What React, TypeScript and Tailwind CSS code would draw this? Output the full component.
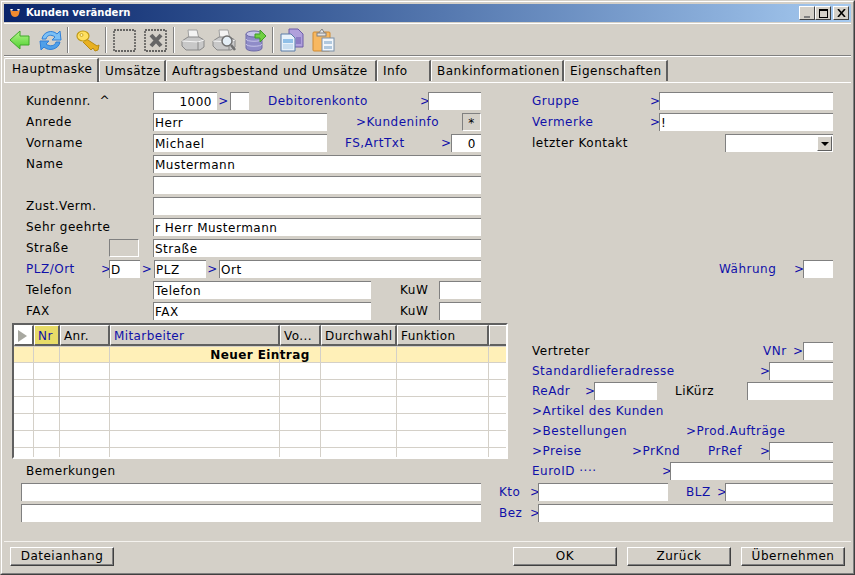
import React from "react";

const Sep = () => <div className="w-[2px] h-[26px] border-l border-[#808080] border-r-white border-r" />;

const Inp = ({ className = "", value = "" }: { className?: string; value?: string }) => (
  <input
    readOnly
    value={value}
    className={`h-[18px] shrink-0 bg-white border-t border-l border-[#808080] pl-[1px] text-[12px] text-black outline-none ${className}`}
  />
);

const L = ({ className = "", children }: { className?: string; children?: React.ReactNode }) => (
  <div className={`h-[18px] leading-[19px] shrink-0 whitespace-nowrap text-black ${className}`}>{children}</div>
);

const B = ({ className = "", children }: { className?: string; children?: React.ReactNode }) => (
  <div className={`h-[18px] leading-[19px] shrink-0 whitespace-nowrap text-[#1010a8] ${className}`}>{children}</div>
);

const Row = ({ className = "", children }: { className?: string; children?: React.ReactNode }) => (
  <div className={`flex items-start h-[21px] ${className}`}>{children}</div>
);

const Tab = ({ w, children, active }: { w: string; children: React.ReactNode; active?: boolean }) => (
  <div
    className={`${w} border-l border-white border-r-2 border-r-[#606060] rounded-tl-[2px] whitespace-nowrap border-t ${
      active ? "h-[24px] pl-[7px] leading-[21px]" : "h-[21px] mt-[2px] pl-[5px] leading-[20px]"
    }`}
  >
    {children}
  </div>
);

const Btn = ({ className = "", children }: { className?: string; children: React.ReactNode }) => (
  <button className={`h-[19px] leading-[17px] border border-t-white border-l-white border-r-[#404040] border-b-[#404040] text-center text-black shadow-[inset_-1px_-1px_0_#808080] ${className}`}>
    {children}
  </button>
);

const Hd = ({ children, className = "" }: { children?: React.ReactNode; className?: string }) => (
  <div className={`h-[21px] leading-[20px] pl-[3px] border-t border-l border-white border-r-2 border-b-2 border-r-[#606060] border-b-[#606060] whitespace-nowrap overflow-hidden ${className}`}>
    {children}
  </div>
);

const gridCols = "grid grid-cols-[20px_26px_50px_170px_41px_76px_92px_20px]";

const Arrow = () => (
  <svg width="22" height="24" viewBox="0 0 22 24">
    <defs><linearGradient id="ga" x1="0" y1="0" x2="0" y2="1"><stop offset="0" stopColor="#b4f58a" /><stop offset="1" stopColor="#4fd030" /></linearGradient></defs>
    <path d="M1 12 L11 3 V8 H20 V17 H11 V21 Z" fill="url(#ga)" stroke="#3fa828" strokeWidth="1" strokeLinejoin="round" />
  </svg>
);
const Refresh = () => (
  <svg width="24" height="24" viewBox="0 0 24 24">
    <path d="M3 11 C4 4 13 1 18 6 L21 3 L22 12 L13 12 L16 9 C12 6 8 7 7 11 Z" fill="#7cc0f5" stroke="#2f7fd8" strokeWidth="1" strokeLinejoin="round" />
    <path d="M21 14 C20 21 10 24 5 19 L2 22 L1 13 L10 13 L7 16 C11 19 16 18 17 14 Z" fill="#4f9fe8" stroke="#2f7fd8" strokeWidth="1" strokeLinejoin="round" />
  </svg>
);
const Key = () => (
  <svg width="24" height="24" viewBox="0 0 24 24">
    <path d="M9 10 L21 18 L23 17 L22 22 L19 23 L17 20 L15 22 L7 14" fill="#e8b020" stroke="#b88a10" strokeWidth="1" />
    <ellipse cx="7" cy="8" rx="6" ry="5" fill="#ffe060" stroke="#c09a18" strokeWidth="1.200" />
    <circle cx="5.500" cy="7" r="1.500" fill="#fff4b0" stroke="#c09a18" strokeWidth="0.800" />
  </svg>
);
const Dashed = ({ x }: { x?: boolean }) => (
  <svg width="23" height="23" viewBox="0 0 23 23">
    <rect x="1" y="1" width="21" height="21" fill="none" stroke="#404040" strokeWidth="1.300" strokeDasharray="2 1" />
    {x && <path d="M7 6 L17 17 M17 6 L7 17" stroke="#666" strokeWidth="4" />}
  </svg>
);
const Printer = ({ mag }: { mag?: boolean }) => (
  <svg width="24" height="24" viewBox="0 0 24 24">
    <path d="M7 2 H16 L18 11 H8 Z" fill="#f4f4f4" stroke="#a0a0a0" />
    <path d="M1 13 L7 9 H18 L23 12 V19 L19 22 H5 L1 18 Z" fill="#c8c8c8" stroke="#888" />
    <path d="M1 13 L17 14 L23 12" fill="none" stroke="#f4f4f4" />
    <path d="M17 14 V22" stroke="#888" />
    {mag && (
      <>
        <circle cx="15" cy="13" r="5" fill="#e4eef6" stroke="#707070" strokeWidth="1.500" />
        <path d="M19 17 L23 22" stroke="#707070" strokeWidth="2.500" />
      </>
    )}
  </svg>
);
const Db = () => (
  <svg width="22" height="24" viewBox="0 0 22 24">
    <path d="M1 6 V20 C1 24 17 24 17 20 V6 Z" fill="#8f8cc8" stroke="#6e6aa8" />
    <ellipse cx="9" cy="6" rx="8" ry="3" fill="#c8c6ea" stroke="#6e6aa8" />
    <path d="M1 11 C1 14 17 14 17 11 M1 16 C1 19 17 19 17 16" fill="none" stroke="#c8c6ea" />
    <path d="M10 6 H15 V2 L21 8 L15 14 V10 H10 Z" fill="#70d040" stroke="#3f9a28" strokeWidth="1" />
  </svg>
);
const Copy = () => (
  <svg width="24" height="24" viewBox="0 0 24 24">
    <path d="M9 1 H18 L23 6 V19 H9 Z" fill="#b0a0dc" stroke="#6c5ca8" />
    <path d="M1 6 H11 L15 10 V23 H1 Z" fill="#e8f2fa" stroke="#5a7ca8" />
    <rect x="3" y="11" width="10" height="4" fill="#90c0e8" />
    <rect x="3" y="16" width="10" height="5" fill="#c8def0" />
    <rect x="16" y="9" width="5" height="7" fill="#8c7cc4" />
  </svg>
);
const Paste = () => (
  <svg width="23" height="24" viewBox="0 0 23 24">
    <rect x="1" y="4" width="17" height="19" rx="1" fill="#f8b860" stroke="#d08a30" />
    <path d="M6 6 L10 1 L13 6 Z" fill="#e8e8e8" stroke="#808080" />
    <rect x="5" y="5" width="9" height="3" fill="#e0e0e0" stroke="#808080" />
    <rect x="10" y="10" width="12" height="13" fill="#f2f6fa" stroke="#7a90a8" />
    <rect x="12" y="13" width="8" height="3" fill="#b0c8de" />
    <rect x="12" y="18" width="8" height="3" fill="#b0c8de" />
  </svg>
);

export default function App() {
  const rows = [0, 1, 2, 3, 4, 5];
  const cells = [0, 1, 2, 3, 4, 5, 6, 7];
  return (
    <div
      className="w-[855px] h-[575px] overflow-hidden bg-[#d4d0c8] border border-t-[#d4d0c8] border-l-[#d4d0c8] border-r-[#404040] border-b-[#404040] text-[12px] text-black tracking-[0.5px]"
      style={{ fontFamily: '"DejaVu Sans", Verdana, sans-serif' }}
    >
      <div className="h-full border border-t-white border-l-white border-r-[#808080] border-b-[#808080] p-[2px] flex flex-col">
        {/* Title bar */}
        <div className="h-[18px] shrink-0 flex items-center bg-gradient-to-r from-[#0a246a] to-[#a6caf0] pl-[4px] pr-[2px]">
          <svg width="12" height="12" viewBox="0 0 12 12" className="ml-[1px]">
            <path d="M1 2 L3 4 H9 L11 2 L10 7 C9 11 3 11 2 7 Z" fill="#f08a30" />
            <path d="M1 2 L3 4 L4 2 Z M11 2 L9 4 L8 2 Z" fill="#fff" />
          </svg>
          <div className="ml-[5px] font-bold text-white text-[10px] tracking-normal leading-[20px]">Kunden verändern</div>
          <div className="ml-auto flex">
            <div className="w-[16px] h-[14px] bg-[#d4d0c8] border border-t-white border-l-white border-r-[#404040] border-b-[#404040] flex items-end justify-center pb-[1px]">
              <div className="w-[6px] h-[2px] bg-[#808080]" />
            </div>
            <div className="w-[16px] h-[14px] bg-[#d4d0c8] border border-t-white border-l-white border-r-[#404040] border-b-[#404040] flex items-center justify-center">
              <div className="w-[9px] h-[9px] border border-t-2 border-black" />
            </div>
            <div className="ml-[2px] w-[16px] h-[14px] bg-[#d4d0c8] border border-t-white border-l-white border-r-[#404040] border-b-[#404040] flex items-center justify-center">
              <svg width="9" height="8" viewBox="0 0 9 8"><path d="M1 0 L8 8 M8 0 L1 8" stroke="#000" strokeWidth="1.600" /></svg>
            </div>
          </div>
        </div>
        <div className="h-[1px] shrink-0 mt-[1px] bg-white" />
        {/* Toolbar */}
        <div className="h-[31px] shrink-0 mt-[1px] flex items-center border-b border-[#808080] pl-[5px]">
          <div className="w-[30px]"><Arrow /></div>
          <div className="w-[28px]"><Refresh /></div>
          <Sep />
          <div className="w-[36px] pl-[7px]"><Key /></div>
          <Sep />
          <div className="w-[37px] pl-[6px]"><Dashed /></div>
          <div className="w-[29px]"><Dashed x /></div>
          <Sep />
          <div className="w-[37px] pl-[6px]"><Printer /></div>
          <div className="w-[33px]"><Printer mag /></div>
          <div className="w-[27px]"><Db /></div>
          <Sep />
          <div className="w-[38px] pl-[6px]"><Copy /></div>
          <div className="w-[24px]"><Paste /></div>
        </div>
        <div className="h-[1px] shrink-0 bg-white" />
        {/* Tabs */}
        <div className="h-[25px] shrink-0 mt-[1px] flex items-start border-b border-white">
          <Tab w="w-[95px]" active>Hauptmaske</Tab>
          <Tab w="w-[67px]">Umsätze</Tab>
          <Tab w="w-[211px]">Auftragsbestand und Umsätze</Tab>
          <Tab w="w-[54px]">Info</Tab>
          <Tab w="w-[133px]">Bankinformationen</Tab>
          <Tab w="w-[104px]">Eigenschaften</Tab>
        </div>

        {/* Top form section */}
        <div className="flex shrink-0 pt-[9px] pl-[22px]">
          <div className="w-[506px] shrink-0">
            <Row>
              <L className="w-[127px]">Kundennr.&nbsp; ^</L>
              <Inp className="w-[64px] text-right pr-[5px]" value="1000" />
              <B className="w-[13px] text-center">&gt;</B>
              <Inp className="w-[19px]" />
              <B className="w-[152px] ml-[19px]">Debitorenkonto</B>
              <B className="w-[8px]">&gt;</B>
              <Inp className="w-[53px]" />
            </Row>
            <Row>
              <L className="w-[127px]">Anrede</L>
              <Inp className="w-[174px]" value="Herr" />
              <B className="w-[106px] ml-[29px]">&gt;Kundeninfo</B>
              <div className="w-[19px] h-[18px] border border-t-[#808080] border-l-[#808080] border-r-white border-b-white text-center leading-[18px] bg-[#d4d0c8]">*</div>
            </Row>
            <Row>
              <L className="w-[127px]">Vorname</L>
              <Inp className="w-[174px]" value="Michael" />
              <B className="w-[96px] ml-[18px]">FS,ArtTxt</B>
              <B className="w-[10px]">&gt;</B>
              <Inp className="w-[30px] text-right pr-[5px]" value="0" />
            </Row>
            <Row>
              <L className="w-[127px]">Name</L>
              <Inp className="w-[328px]" value="Mustermann" />
            </Row>
            <Row>
              <L className="w-[127px]" />
              <Inp className="w-[328px]" />
            </Row>
            <Row>
              <L className="w-[127px]">Zust.Verm.</L>
              <Inp className="w-[328px]" />
            </Row>
            <Row>
              <L className="w-[127px]">Sehr geehrte</L>
              <Inp className="w-[328px]" value="r Herr Mustermann" />
            </Row>
            <Row>
              <L className="w-[83px]">Straße</L>
              <div className="w-[30px] h-[18px] border border-t-[#808080] border-l-[#808080] border-r-white border-b-white bg-[#d4d0c8]" />
              <div className="w-[14px]" />
              <Inp className="w-[328px]" value="Straße" />
            </Row>
            <Row>
              <B className="w-[75px]">PLZ/Ort</B>
              <B className="w-[8px]">&gt;</B>
              <Inp className="w-[31px]" value="D" />
              <B className="w-[14px] text-center">&gt;</B>
              <Inp className="w-[52px]" value="PLZ" />
              <B className="w-[13px] text-center">&gt;</B>
              <Inp className="w-[262px]" value="Ort" />
            </Row>
            <Row>
              <L className="w-[127px]">Telefon</L>
              <Inp className="w-[218px]" value="Telefon" />
              <L className="w-[39px] ml-[29px]">KuW</L>
              <Inp className="w-[42px]" />
            </Row>
            <Row>
              <L className="w-[127px]">FAX</L>
              <Inp className="w-[218px]" value="FAX" />
              <L className="w-[39px] ml-[29px]">KuW</L>
              <Inp className="w-[42px]" />
            </Row>
          </div>
          <div className="w-[301px] shrink-0">
            <Row>
              <B className="w-[118px]">Gruppe</B>
              <B className="w-[9px]">&gt;</B>
              <Inp className="w-[174px]" />
            </Row>
            <Row>
              <B className="w-[118px]">Vermerke</B>
              <B className="w-[9px]">&gt;</B>
              <Inp className="w-[174px]" value="!" />
            </Row>
            <Row>
              <L className="w-[193px]">letzter Kontakt</L>
              <div className="w-[108px] h-[18px] bg-white border-t border-l border-[#808080] flex justify-end p-[1px]">
                <div className="w-[15px] h-[15px] bg-[#d4d0c8] border border-t-white border-l-white border-r-[#606060] border-b-[#606060] flex items-center justify-center">
                  <div className="w-0 h-0 border-x-[4px] border-x-transparent border-t-[4px] border-t-black" />
                </div>
              </div>
            </Row>
            <Row className="mt-[105px]">
              <B className="w-[75px] ml-[187px]">Währung</B>
              <B className="w-[9px]">&gt;</B>
              <Inp className="w-[30px]" />
            </Row>
          </div>
        </div>

        {/* Middle section */}
        <div className="flex shrink-0 h-[160px] pl-[8px]">
          <div className="w-[520px] shrink-0">
            <div className="w-[496px] h-[136px] bg-white border-t-2 border-l-2 border-[#606060] border-r-2 border-r-white border-b-2 border-b-white overflow-hidden tracking-[0.4px]">
              <div className={gridCols}>
                <Hd><div className="w-0 h-0 mt-[4px] border-y-[6px] border-y-transparent border-l-[9px] border-l-[#a8a8a0]" /></Hd>
                <Hd className="bg-[#e8dc68] text-[#1010a8]">Nr</Hd>
                <Hd className="bg-[#d4d0c8]">Anr.</Hd>
                <Hd className="bg-[#d4d0c8] text-[#1010a8]">Mitarbeiter</Hd>
                <Hd className="bg-[#d4d0c8]">Vo...</Hd>
                <Hd className="bg-[#d4d0c8]">Durchwahl</Hd>
                <Hd className="bg-[#d4d0c8]">Funktion</Hd>
                <Hd className="bg-[#d4d0c8]" />
              </div>
              <div className="relative h-[17px] bg-[#fff0b8] border-y border-[#d4d0c8]">
                <div className={`${gridCols} h-full`}>
                  {cells.map((c) => <div key={c} className="border-r border-[#d4d0c8]" />)}
                </div>
                <div className="absolute inset-0 text-center font-bold leading-[16px]">Neuer Eintrag</div>
              </div>
              {rows.map((r) => (
                <div key={r} className={`${gridCols} h-[17px] border-b border-[#d4d0c8]`}>
                  {cells.map((c) => <div key={c} className="border-r border-[#d4d0c8]" />)}
                </div>
              ))}
            </div>
            <L className="ml-[14px] mt-[3px]">Bemerkungen</L>
          </div>
          <div className="flex flex-col pt-[19px] w-[301px] shrink-0">
            <div className="flex h-[20px] items-start">
              <L className="w-[231px]">Vertreter</L>
              <B className="w-[30px]">VNr</B>
              <B className="w-[10px]">&gt;</B>
              <Inp className="w-[30px]" />
            </div>
            <div className="flex h-[20px] items-start">
              <B className="w-[228px]">Standardlieferadresse</B>
              <B className="w-[9px]">&gt;</B>
              <Inp className="w-[64px]" />
            </div>
            <div className="flex h-[20px] items-start">
              <B className="w-[53px]">ReAdr</B>
              <B className="w-[9px]">&gt;</B>
              <Inp className="w-[63px]" />
              <L className="w-[72px] ml-[18px]">LiKürz</L>
              <Inp className="w-[86px]" />
            </div>
            <div className="flex h-[20px] items-start">
              <B>&gt;Artikel des Kunden</B>
            </div>
            <div className="flex h-[20px] items-start">
              <B className="w-[154px]">&gt;Bestellungen</B>
              <B>&gt;Prod.Aufträge</B>
            </div>
            <div className="flex h-[20px] items-start">
              <B className="w-[100px]">&gt;Preise</B>
              <B className="w-[76px]">&gt;PrKnd</B>
              <B className="w-[52px]">PrRef</B>
              <B className="w-[9px]">&gt;</B>
              <Inp className="w-[64px]" />
            </div>
            <div className="flex h-[20px] items-start">
              <B className="w-[130px]">EuroID ····</B>
              <B className="w-[8px]">&gt;</B>
              <Inp className="w-[163px]" />
            </div>
          </div>
        </div>

        {/* Bottom fields */}
        <div className="shrink-0 pl-[17px]">
          <Row>
            <Inp className="w-[460px]" />
            <B className="w-[31px] ml-[18px]">Kto</B>
            <B className="w-[8px]">&gt;</B>
            <Inp className="w-[130px]" />
            <B className="w-[31px] ml-[18px]">BLZ</B>
            <B className="w-[8px]">&gt;</B>
            <Inp className="w-[108px]" />
          </Row>
          <Row>
            <Inp className="w-[460px]" />
            <B className="w-[31px] ml-[18px]">Bez</B>
            <B className="w-[8px]">&gt;</B>
            <Inp className="w-[295px]" />
          </Row>
        </div>

        {/* Footer */}
        <div className="mt-[16px] shrink-0 border-t border-[#f4f2ee] pt-[5px] pl-[6px] pr-[6px] flex">
          <Btn className="w-[104px]">Dateianhang</Btn>
          <Btn className="w-[104px] ml-auto">OK</Btn>
          <Btn className="w-[104px] ml-[10px]">Zurück</Btn>
          <Btn className="w-[104px] ml-[10px]">Übernehmen</Btn>
        </div>
      </div>
    </div>
  );
}
